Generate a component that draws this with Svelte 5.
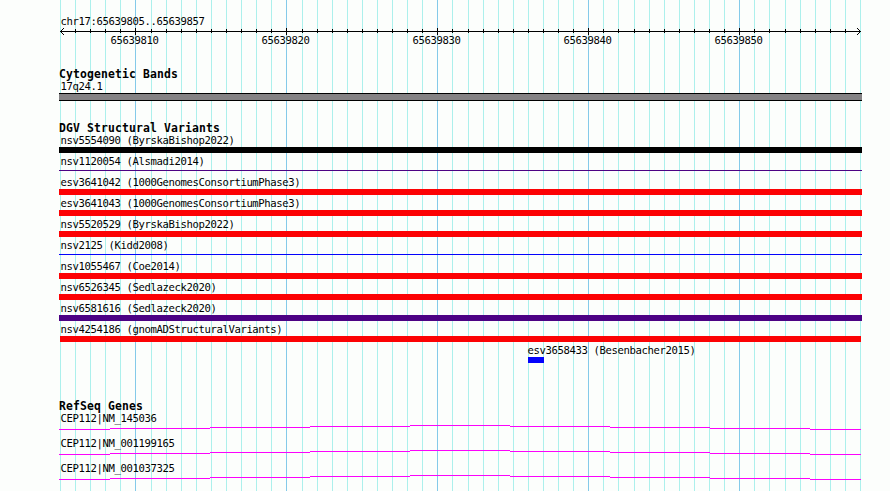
<!-- Genome browser panel: scale ruler, cytogenetic bands, structural variants and genes over a base grid -->
<script lang="ts">
  interface Variant {
    name: string;
    kind: string;
    start?: boolean;
  }

  const left = 60;
  const width = 800;
  const bases = 53;
  const firstBase = 65639805;

  const lines = Array.from({ length: bases + 1 }, (_, i) => ({
    base: firstBase + i,
    x: left + Math.round((i * width) / bases),
    major: (firstBase + i) % 10 === 0,
  }));
  const majors = lines.filter(({ major }) => major);

  const variants: Variant[] = [
    { name: 'nsv5554090 (ByrskaBishop2022)', kind: 'black' },
    { name: 'nsv1120054 (Alsmadi2014)', kind: 'thin purple' },
    { name: 'esv3641042 (1000GenomesConsortiumPhase3)', kind: 'red' },
    { name: 'esv3641043 (1000GenomesConsortiumPhase3)', kind: 'red' },
    { name: 'nsv5520529 (ByrskaBishop2022)', kind: 'red' },
    { name: 'nsv2125 (Kidd2008)', kind: 'thin blue' },
    { name: 'nsv1055467 (Coe2014)', kind: 'red' },
    { name: 'nsv6526345 (Sedlazeck2020)', kind: 'red' },
    { name: 'nsv6581616 (Sedlazeck2020)', kind: 'purple' },
    { name: 'nsv4254186 (gnomADStructuralVariants)', kind: 'red inset' },
    { name: 'esv3658433 (Besenbacher2015)', kind: 'blue', start: true },
  ];

  const genes = ['CEP112|NM_145036', 'CEP112|NM_001199165', 'CEP112|NM_001037325'];

  // intron line, rises one pixel per 100px towards the middle
  const steps = [
    { x: 0, y: 4, w: 51 },
    { x: 51, y: 3, w: 100 },
    { x: 151, y: 2, w: 100 },
    { x: 251, y: 1, w: 100 },
    { x: 351, y: 0, w: 100 },
    { x: 451, y: 1, w: 100 },
    { x: 551, y: 2, w: 100 },
    { x: 651, y: 3, w: 100 },
    { x: 751, y: 4, w: 51 },
  ];
</script>

<main>
  <svg class="grid" width="890" height="491" shape-rendering="crispEdges">
    {#each lines as line (line.base)}
      <rect class:major={line.major} x={line.x} y="0" width="1" height="491" />
    {/each}
  </svg>

  <section class="ruler">
    <div class="label">chr17:65639805..65639857</div>
    <svg class="axis" width="890" height="9" shape-rendering="crispEdges">
      <rect x="60" y="4" width="801" height="1" />
      {#each lines.slice(1, -1) as line (line.base)}
        <rect x={line.x} y={line.major ? 1 : 2} width="1" height={line.major ? 7 : 4} />
      {/each}
      {#each [1, 2, 3] as d}
        <rect x={60 + d} y={4 - d} width="1" height="1" />
        <rect x={60 + d} y={4 + d} width="1" height="1" />
        <rect x={860 - d} y={4 - d} width="1" height="1" />
        <rect x={860 - d} y={4 + d} width="1" height="1" />
      {/each}
    </svg>
    <svg class="numbers" width="890" height="12">
      {#each majors as { base, x } (base)}
        <text x={x - 24.5} y="9">{base}</text>
      {/each}
    </svg>
  </section>

  <section class="bands">
    <h2>Cytogenetic Bands</h2>
    <div class="label">17q24.1</div>
    <div class="band"></div>
  </section>

  <section class="variants">
    <h2>DGV Structural Variants</h2>
    {#each variants as variant (variant.name)}
      <div class="variant" class:short={variant.start}>
        <div class="label">{variant.name}</div>
        <div class="bar {variant.kind}"></div>
      </div>
    {/each}
  </section>

  <section class="genes">
    <h2>RefSeq Genes</h2>
    {#each genes as gene (gene)}
      <div class="gene">
        <div class="label">{gene}</div>
        <svg width="802" height="5" shape-rendering="crispEdges">
          {#each steps as { x, y, w }}
            <rect {x} {y} width={w} height="1" />
          {/each}
        </svg>
      </div>
    {/each}
  </section>
</main>

<style>
  :global(body) {
    margin: 0;
    background: #fcfefc;
  }

  main {
    position: relative;
    display: flex;
    flex-direction: column;
    width: 890px;
    height: 491px;
    overflow: hidden;
    background: #fcfefc;
    color: #000;
    font: 10.6px/10px 'DejaVu Sans Mono', monospace;
    letter-spacing: -0.382px;
  }

  svg {
    display: block;
  }

  .grid {
    position: absolute;
    inset: 0;
    fill: #acf0ec;
  }

  .grid .major {
    fill: #84cae9;
  }

  section {
    position: relative;
    box-sizing: border-box;
    padding-left: 59px;
  }

  h2 {
    height: 12px;
    margin: 0;
    font-size: 11.4px;
    line-height: 10px;
    letter-spacing: 0.137px;
    white-space: pre;
  }

  .label {
    height: 12px;
    padding-left: 1.5px;
    white-space: pre;
  }

  .ruler {
    height: 69px;
    padding: 16px 0 0;
  }

  .ruler .label {
    height: 11px;
    padding-left: 60.5px;
  }

  .numbers {
    margin-top: -1px;
  }

  .bands {
    height: 54px;
  }

  .band {
    box-sizing: border-box;
    width: 803px;
    height: 8px;
    border: solid #000;
    border-width: 1px 0;
    background: #848284;
  }

  .variants {
    height: 278px;
  }

  .variant {
    height: 21px;
  }

  .short {
    padding-left: 469px;
  }

  .short .label {
    padding-left: 0;
    text-indent: -0.5px;
  }

  .bar {
    width: 803px;
    height: 6px;
  }

  .black {
    background: #000;
  }

  .red {
    background: #fc0204;
  }

  .purple {
    background: #4c0284;
  }

  .blue {
    background: #0402fc;
  }

  .thin {
    height: 1px;
    margin-top: 2px;
  }

  .inset {
    width: 801px;
    margin-left: 1px;
  }

  .short .bar {
    width: 16px;
  }

  .gene {
    height: 25px;
  }

  .gene svg {
    fill: #fc02fc;
  }
</style>
